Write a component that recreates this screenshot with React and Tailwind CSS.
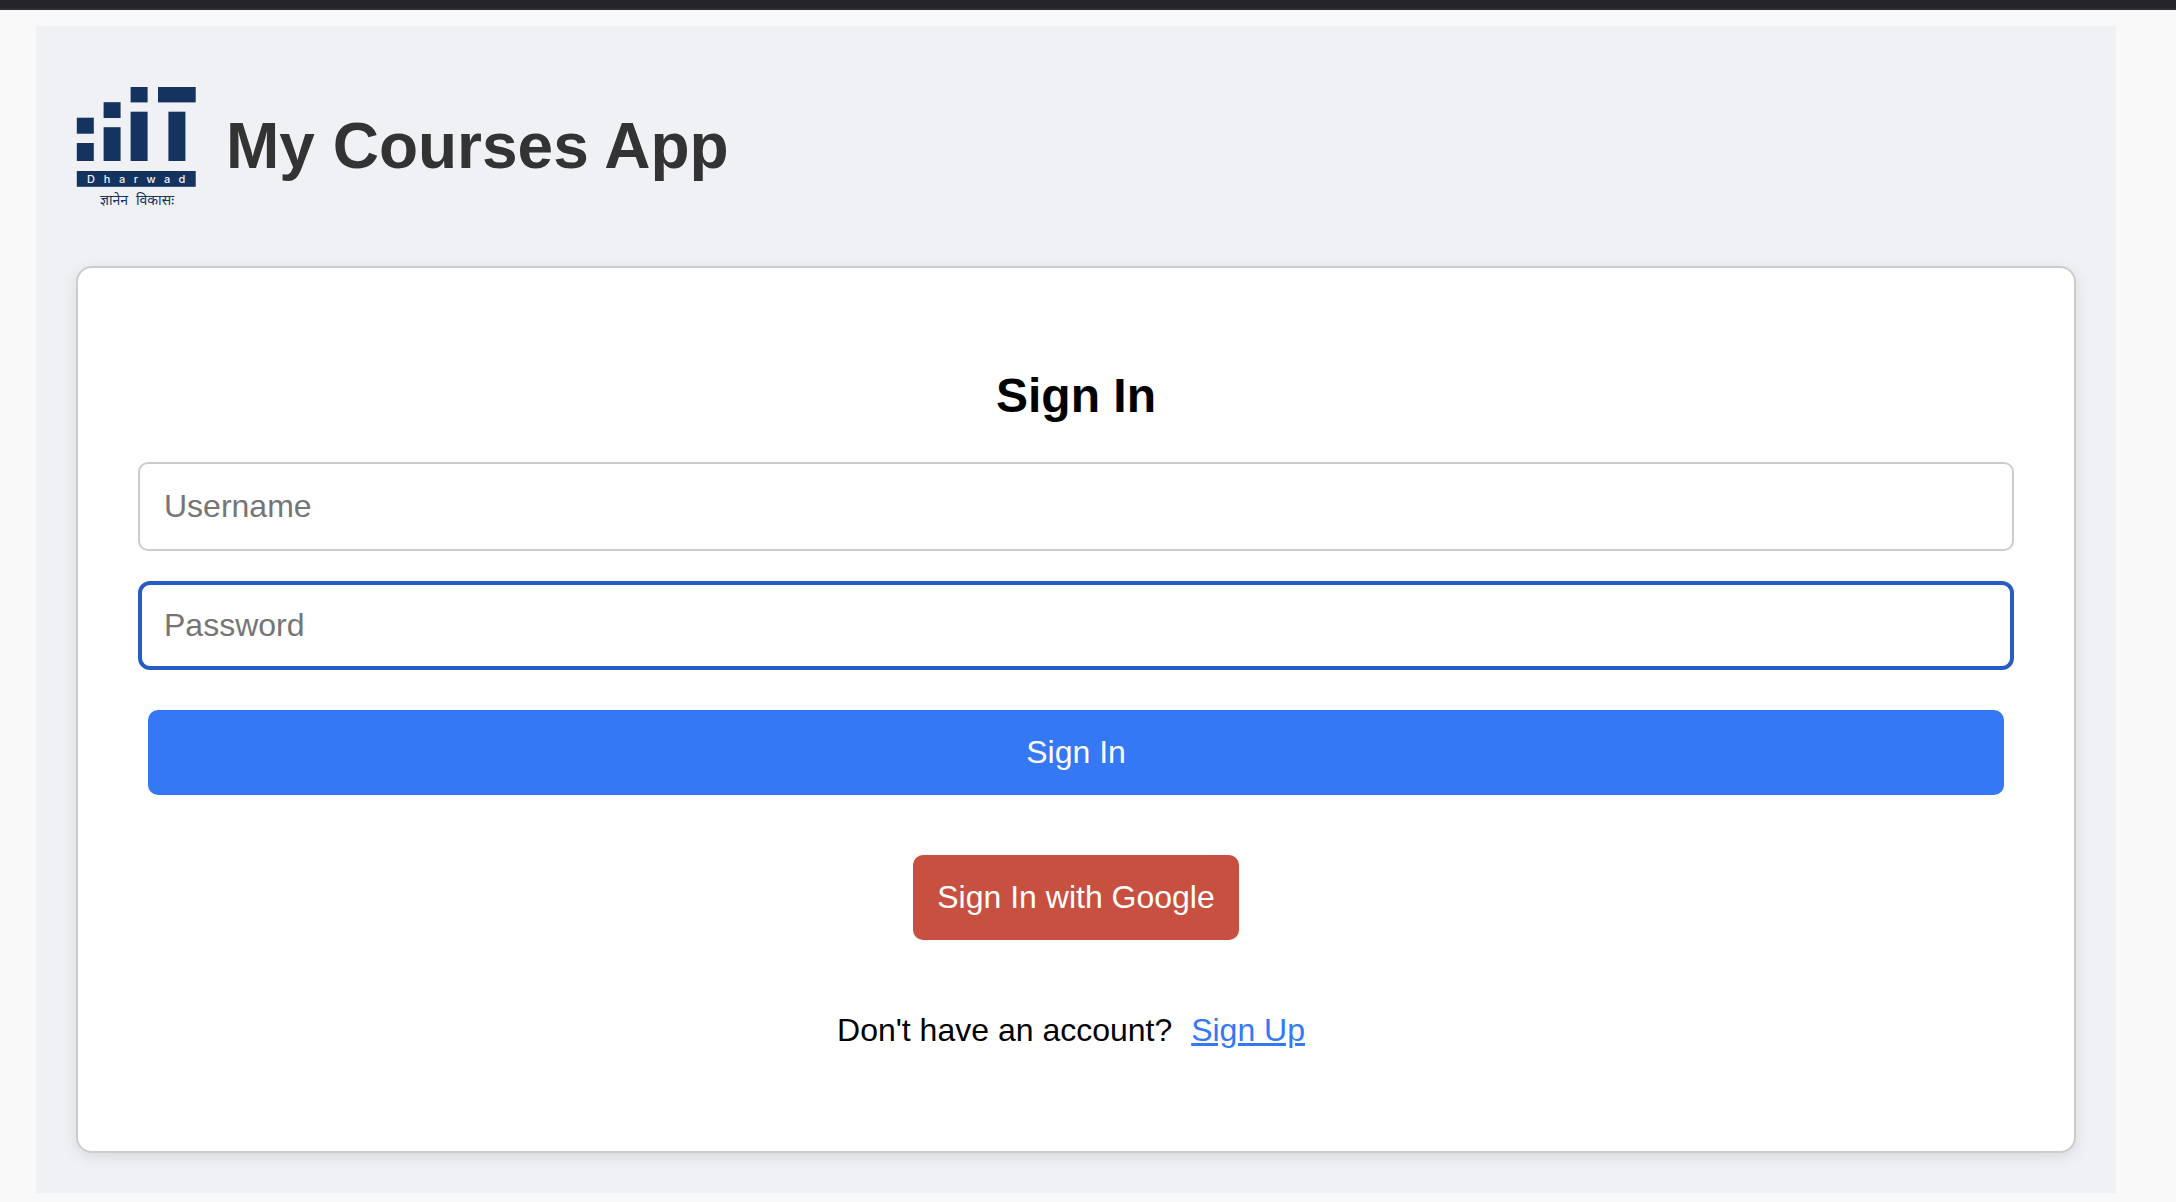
function Logo() {
  const letters = [
    ['D', 15],
    ['h', 31],
    ['a', 46],
    ['r', 60],
    ['w', 75],
    ['a', 91],
    ['d', 106],
  ];
  return (
    <svg className="size-[120px] shrink-0 overflow-visible" viewBox="0 0 120 120" role="img" aria-label="IIT Dharwad">
      <g fill="#14335f">
        <rect x="0.8" y="31.7" width="17" height="16" />
        <rect x="0.8" y="57" width="17" height="18" />
        <rect x="27.6" y="16.2" width="17" height="15.8" />
        <rect x="27.6" y="41.2" width="17" height="33.8" />
        <rect x="54.6" y="1" width="17" height="15.4" />
        <rect x="54.6" y="25.7" width="17" height="49.3" />
        <rect x="82" y="1" width="37.7" height="15.4" />
        <rect x="92.4" y="25.7" width="17" height="49.3" />
        <rect x="0.8" y="85" width="118.9" height="15.8" />
      </g>
      <g fill="#f0f1f5" fontSize="11" fontWeight="500" textAnchor="middle" className="font-[Inter,sans-serif]">
        {letters.map(([c, x]) => (
          <text key={x} x={x} y="97">{c}</text>
        ))}
      </g>
      <g fill="#14335f" fontSize="14" textAnchor="middle" className="font-['Noto_Sans',sans-serif]">
        <text x="38" y="119">ज्ञानेन</text>
        <text x="79" y="119">विकासः</text>
      </g>
    </svg>
  );
}

export default function App() {
  return (
    <div className="min-h-screen bg-[#f9f9f9] font-['Liberation_Sans',Arial,sans-serif] text-[32px] leading-[37px] text-black">
      <div className="h-[10px] border-b-2 border-[#2f2e33] bg-[#252429]" />
      <div className="mt-4 mr-[60px] ml-9 bg-[#f0f1f5] px-10 pt-[60px] pb-10">
        <header className="flex items-center gap-[30px]">
          <Logo />
          <h1 className="text-[64px] leading-[74px] font-bold text-[#333333]">My Courses App</h1>
        </header>
        <main className="mt-[60px] rounded-2xl border-2 border-[#cccccc] bg-white px-[60px] pt-[100px] pb-[102px] shadow-[0_4px_16px_rgba(0,0,0,0.1)]">
          <form className="flex flex-col" onSubmit={(e) => e.preventDefault()}>
            <h2 className="text-center text-5xl leading-[56px] font-bold">Sign In</h2>
            <input
              type="text"
              aria-label="Username"
              placeholder="Username"
              className="mt-[38px] h-[89px] rounded-[10px] border-2 border-[#cccccc] px-6 outline-none placeholder:text-[#757575]"
            />
            <input
              type="password"
              aria-label="Password"
              placeholder="Password"
              className="mt-[30px] h-[89px] rounded-xl border-4 border-[#265dc5] px-[22px] outline-none placeholder:text-[#757575]"
            />
            <button type="submit" className="mx-[10px] mt-10 rounded-[10px] bg-[#3478f6] py-6 text-white">
              Sign In
            </button>
            <button type="button" className="mt-[60px] self-center rounded-[10px] bg-[#c85040] px-6 py-6 text-white">
              Sign In with Google
            </button>
          </form>
          <p className="mt-[72px] text-center">
            Don't have an account?{' '}
            <a href="#signup" className="mx-[10px] text-[#3478f6] underline">Sign Up</a>
          </p>
        </main>
      </div>
    </div>
  );
}
